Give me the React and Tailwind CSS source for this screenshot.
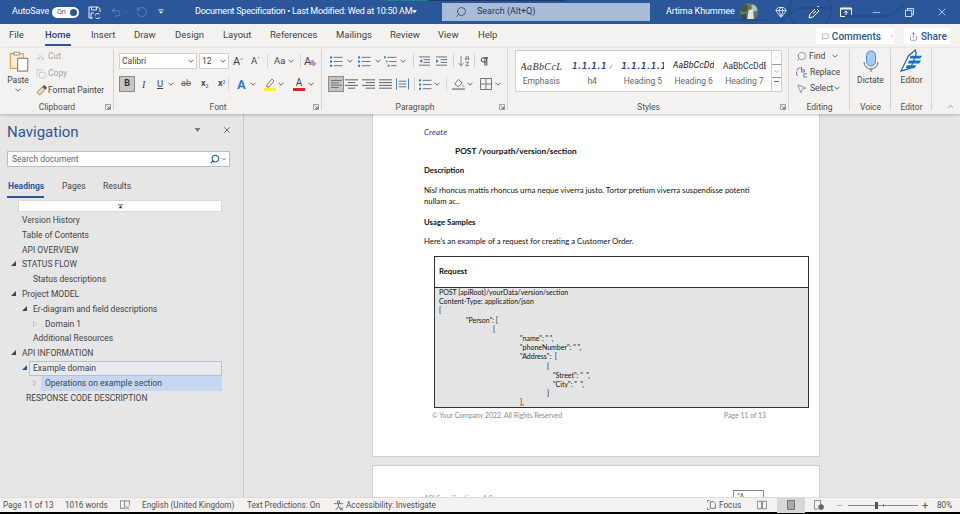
import React from "react";
import { Undo2, RotateCw, Search, Gem, Minus, X, Scissors, Copy, ChevronDown, ChevronUp, MessageSquare, Share, ArrowDownAZ, Pilcrow, MousePointer2 } from "lucide-react";

const Chev = ({ className = "" }) => (
  <svg viewBox="0 0 6 4" className={"w-[6px] h-[4px] shrink-0 " + className}><path d="M.5.7 3 3.2 5.5.7" fill="none" stroke="#555" strokeWidth=".9" /></svg>
);

const Lines = ({ kind = "left", className = "" }) => {
  const rows = {
    left: [[0, 14], [0, 10], [0, 14], [0, 10]],
    center: [[0, 14], [3, 11], [0, 14], [3, 11]],
    right: [[0, 14], [4, 14], [0, 14], [4, 14]],
    justify: [[0, 14], [0, 14], [0, 14], [0, 14]],
  }[kind];
  return (
    <svg viewBox="0 0 14 12" className={"w-[13px] h-[12px] shrink-0 " + className}>
      {rows.map((r, i) => <path key={i} d={`M${r[0]} ${1.5 + i * 3}H${r[1]}`} stroke="#666" strokeWidth="1.1" />)}
    </svg>
  );
};

const ListIcon = ({ kind }) => (
  <svg viewBox="0 0 14 13" className="w-[13px] h-[13px] shrink-0">
    {[2, 6.5, 11].map((y, i) => (
      <g key={i}>
        {kind === "multi"
          ? <rect x={i * 2} y={y - 1} width="2" height="2" fill={i === 1 ? "#888" : "#2b7cd3"} />
          : <rect x="0" y={y - 1} width="2.2" height="2.2" fill="#2b7cd3" />}
        <path d={`M${kind === "multi" ? 3.5 + i * 2 : 4} ${y}H13.5`} stroke="#777" strokeWidth="1.1" />
      </g>
    ))}
  </svg>
);

const Indent = ({ inc }) => (
  <svg viewBox="0 0 12 12" className="w-[11px] h-[11px] shrink-0">
    {[1, 4, 7, 10].map((y, i) => <path key={i} d={`M${i === 1 || i === 2 ? 5 : 0} ${y}H12`} stroke="#666" strokeWidth="1" />)}
    <path d={inc ? "M0 3.5V7.5L3 5.5Z" : "M3.5 3.5V7.5L.5 5.5Z"} fill="#2b7cd3" />
  </svg>
);

const Launcher = ({ className = "" }) => (
  <svg viewBox="0 0 7 7" className={"w-[6px] h-[6px] shrink-0 " + className}>
    <path d="M.5 6.5V.5H6.5V6.5Z" fill="none" stroke="#777" strokeWidth=".8" />
    <path d="M2 2 5.5 5.5M3 5.5H5.5V3" fill="none" stroke="#555" strokeWidth=".8" />
  </svg>
);

const Group = ({ w, label, launcher, divider = true, children }) => (
  <div className={"relative h-full shrink-0 flex flex-col " + w}>
    {divider && <div className="absolute right-0 top-[1px] bottom-[4px] w-px bg-[#d4d3d2]" />}
    <div className="flex-1 min-h-0">{children}</div>
    <div className="h-[14px] shrink-0 flex items-center justify-center text-[8.5px] text-[#505050] leading-none">{label}</div>
    {launcher && <Launcher className="absolute right-[3px] bottom-[4px]" />}
  </div>
);

function TitleBar() {
  return (
    <div className="relative h-[24px] shrink-0 bg-[#2b579a] flex items-center text-white text-[9.5px] overflow-hidden">
      <svg viewBox="0 0 300 24" className="absolute right-0 top-0 w-[300px] h-[24px]" fill="none" stroke="#254e8d" strokeWidth="2">
        <circle cx="150" cy="10" r="21" />
        <path d="M120 22 138 8H170M185 16H230L245 4M60 20H110" />
      </svg>
      <div className="absolute left-[385px] top-0 w-[43px] h-px bg-[#1d7f8c]" />
      <div className="absolute left-[428px] top-0 w-[137px] h-px bg-[#1b3a6c]" />
      <span className="ml-[12px] w-[40px] text-[9px] tracking-[-.1px]">AutoSave</span>
      <div className="w-[27px] h-[11px] rounded-full bg-white flex items-center justify-between pl-[5px] pr-[2px] text-[#2b579a] text-[7px]">
        <span>On</span><span className="w-[7px] h-[7px] rounded-full bg-[#2b579a]" />
      </div>
      <svg viewBox="0 0 13 13" className="ml-[9px] w-[13px] h-[13px]" fill="none" stroke="#fff" strokeWidth=".9">
        <path d="M5 12H1V1H10L12 3V6" /><path d="M3.5 1V4H8.5V1M3 12V7H6" /><path d="M7 9.5A2.5 2.5 0 0 1 11.5 8.5M12 11A2.5 2.5 0 0 1 7.5 11.5" />
      </svg>
      <Undo2 className="ml-[9px] w-[12px] h-[12px] opacity-30" strokeWidth={1.5} />
      <Chev className="ml-[1px] opacity-30 invert" />
      <RotateCw className="ml-[7px] w-[12px] h-[12px] opacity-30 -scale-x-100" strokeWidth={1.5} />
      <svg viewBox="0 0 7 6" className="ml-[10px] w-[6px] h-[6px]"><path d="M.5.5H6.500" stroke="#fff" /><path d="M1 2.500H6L3.500 5Z" fill="#fff" /></svg>
      <span className="ml-[31px] w-[214px] whitespace-nowrap text-[9px] tracking-[-.25px]">Document Specification • Last Modified: Wed at 10:50 AM</span>
      <svg viewBox="0 0 6 4" className="ml-[3px] w-[5px] h-[4px]"><path d="M0 0H6L3 3.500Z" fill="#fff" /></svg>
      <div className="ml-[25px] w-[208px] h-[18px] bg-[#a8bbd7] flex items-center text-[#24385a] text-[9px]">
        <Search className="ml-[13px] w-[12px] h-[12px] -scale-x-100" strokeWidth={1.4} />
        <span className="ml-[10px]">Search (Alt+Q)</span>
      </div>
      <span className="ml-[16px] w-[72px] whitespace-nowrap text-[9px] tracking-[-.1px]">Artima Khummee</span>
      <svg viewBox="0 0 18 18" className="ml-[2px] w-[18px] h-[18px]">
        <clipPath id="av"><circle cx="9" cy="9" r="9" /></clipPath>
        <g clipPath="url(#av)">
          <rect width="18" height="18" fill="#5d7c62" />
          <circle cx="4" cy="5" r="4" fill="#3f5a48" />
          <circle cx="14" cy="5" r="3.500" fill="#a9c4b8" />
          <path d="M7 18 9 5 13 7 14 18Z" fill="#e4e4dc" />
          <path d="M0 18V12L6 11 7 18Z" fill="#384b3e" />
          <circle cx="10" cy="5" r="2" fill="#8a6a52" />
        </g>
      </svg>
      <Gem className="ml-[17px] w-[12px] h-[12px]" strokeWidth={1.5} />
      <svg viewBox="0 0 12 13" className="ml-[21px] w-[12px] h-[13px]" fill="none" stroke="#fff" strokeWidth="1"><path d="M1 12 2 8 8 2 11 5 5 11Z" /><path d="M8 5 5 8" /><path d="M10 0V2M11 1H9" /></svg>
      <svg viewBox="0 0 12 10" className="ml-[20px] w-[12px] h-[10px]" fill="none" stroke="#fff"><path d="M.5 1.500H11.500V9.500H.5Z" /><path d="M.5 1.500H11.500" strokeWidth="2" /><path d="M6 8V4M4.300 5.600 6 4 7.700 5.600" /></svg>
      <Minus className="ml-[19px] w-[11px] h-[11px]" strokeWidth={1.3} />
      <svg viewBox="0 0 10 10" className="ml-[23px] w-[9px] h-[9px]" fill="none" stroke="#fff" strokeWidth=".9"><path d="M.5 2.500H7.500V9.500H.5Z" /><path d="M2.500 2.500V.5H9.500V7.500H7.500" /></svg>
      <X className="ml-[22px] w-[12px] h-[12px]" strokeWidth={1.3} />
    </div>
  );
}

function TabsRow() {
  const tabs = [["File", "w-[36px]"], ["Home", "w-[46px]"], ["Insert", "w-[43px]"], ["Draw", "w-[41px]"], ["Design", "w-[48px]"], ["Layout", "w-[47px]"], ["References", "w-[66px]"], ["Mailings", "w-[54px]"], ["Review", "w-[48px]"], ["View", "w-[40px]"], ["Help", "w-[40px]"]];
  return (
    <div className="h-[24px] shrink-0 flex items-center text-[9.5px] text-[#444] pl-[9px]">
      {tabs.map(([t, w]) => (
        <div key={t} className={w + " shrink-0 -translate-y-[1px]"}>
          {t === "Home"
            ? <span className="inline-block text-[#1f3f73] font-medium border-b-2 border-[#2b579a] pb-[1px] translate-y-[2px]">{t}</span>
            : <span>{t}</span>}
        </div>
      ))}
      <div className="ml-auto flex items-center gap-[9px] pr-[9px]">
        <div className="w-[79px] h-[16px] bg-white flex items-center pl-[6px] text-[#2b579a] font-medium text-[10px]">
          <MessageSquare className="w-[9px] h-[9px] mr-[3px]" strokeWidth={1.4} />
          <span>Comments</span>
          <ChevronDown className="ml-[8px] w-[8px] h-[8px] text-[#666]" strokeWidth={1.5} />
        </div>
        <div className="w-[47px] h-[16px] bg-white flex items-center pl-[5px] text-[#2b579a] font-medium text-[10px]">
          <Share className="w-[9px] h-[9px] mr-[3px]" strokeWidth={1.4} />
          <span>Share</span>
        </div>
      </div>
    </div>
  );
}

function Clipboard() {
  return (
    <Group w="w-[114px]" label="Clipboard" launcher>
      <div className="flex h-full">
        <div className="w-[36px] flex flex-col items-center pt-[2px] text-[8.5px] text-[#444]">
          <svg viewBox="0 0 22 24" className="w-[21px] h-[22px] ml-[2px]">
            <path d="M1 4H15V20H1Z" fill="#f8ecd8" stroke="#d79f4d" strokeWidth="1.2" />
            <path d="M5 2.500H11V5.500H5Z" fill="#fff" stroke="#888" />
            <path d="M9 9H20V23H9Z" fill="#fff" stroke="#666" />
          </svg>
          <span className="mt-[3px] leading-[11px]">Paste</span>
          <Chev className="mt-[2px]" />
        </div>
        <div className="flex flex-col text-[8.5px] text-[#a5a5a5]">
          <div className="h-[17px] flex items-center"><Scissors className="w-[9px] h-[9px] text-[#aaa] mr-[3px] -rotate-90" strokeWidth={1.2} /><span>Cut</span></div>
          <div className="h-[17px] flex items-center"><Copy className="w-[10px] h-[10px] text-[#aaa] mr-[2px]" strokeWidth={1.2} /><span>Copy</span></div>
          <div className="h-[17px] flex items-center text-[#444] whitespace-nowrap">
            <svg viewBox="0 0 12 12" className="w-[11px] h-[11px] mr-[1px]"><path d="M1 8 7 2 10 5 4 11Z" fill="#f3d9a4" stroke="#666" strokeWidth=".8" /><path d="M7 2 9 0 12 3 10 5Z" fill="#555" /></svg>
            <span>Format Painter</span>
          </div>
        </div>
      </div>
    </Group>
  );
}

function FontGroup() {
  return (
    <Group w="w-[208px]" label="Font" launcher>
      <div className="pl-[5px] pt-[5px] flex flex-col gap-[7px]">
        <div className="flex items-center h-[16px] text-[#444]">
          <div className="w-[78px] h-[16px] bg-white border border-[#d0d0d0] flex items-center justify-between px-[2px] text-[8.5px]"><span>Calibri</span><Chev /></div>
          <div className="ml-[2px] w-[30px] h-[16px] bg-white border border-[#d0d0d0] flex items-center justify-between px-[2px] text-[8.5px]"><span>12</span><Chev /></div>
          <span className="ml-[4px] w-[12px] text-[11px] leading-none">A<sup className="text-[6px] text-[#2b7cd3]">^</sup></span>
          <span className="ml-[6px] w-[12px] text-[9.5px] leading-none">A<sup className="text-[6px] text-[#2b7cd3]">ˇ</sup></span>
          <div className="ml-[4px] w-px h-[14px] bg-[#d4d3d2]" />
          <span className="ml-[6px] text-[9.5px] w-[13px]">Aa</span><Chev className="ml-[1px]" />
          <div className="ml-[6px] w-px h-[14px] bg-[#d4d3d2]" />
          <span className="ml-[3px] text-[11px] leading-none relative">A<span className="absolute left-[6px] top-[5px] w-[6px] h-[4px] bg-[#c88bd6] rotate-45" /></span>
        </div>
        <div className="flex items-center h-[16px] text-[#444] text-[10px]">
          <div className="w-[16px] h-[16px] bg-[#c6c6c6] border border-[#8a8a8a] flex items-center justify-center font-bold text-[9px] text-[#333]">B</div>
          <span className="ml-[7px] w-[8px] italic font-['Liberation_Serif']">I</span>
          <span className="ml-[7px] underline w-[8px] text-[9.5px]">U</span>
          <Chev className="ml-[3px]" />
          <span className="ml-[7px] w-[12px] line-through text-[#666] text-[9px]">ab</span>
          <span className="ml-[8px] w-[11px] font-semibold text-[9px]">x<sub className="text-[5px] text-[#2b7cd3]">2</sub></span>
          <span className="ml-[6px] w-[11px] font-semibold text-[9px]">x<sup className="text-[5px] text-[#2b7cd3]">2</sup></span>
          <div className="ml-[-1px] w-px h-[14px] bg-[#d4d3d2]" />
          <span className="ml-[8px] w-[12px] text-[13px] font-bold text-[#2b7cd3] leading-none">A</span>
          <Chev className="ml-[1px]" />
          <svg viewBox="0 0 12 14" className="ml-[8px] w-[12px] h-[14px] shrink-0"><path d="M3 8 8 2 10 4 5 10H3Z" fill="#fff" stroke="#666" strokeWidth=".9" /><rect y="11" width="12" height="3" fill="#ffef33" /></svg>
          <Chev className="ml-[2px]" />
          <div className="ml-[9px] w-[12px] flex flex-col items-center leading-none"><span className="text-[10px] leading-[11px]">A</span><span className="w-[12px] h-[3px] bg-[#e01f26]" /></div>
          <Chev className="ml-[3px]" />
        </div>
      </div>
    </Group>
  );
}

function ParagraphGroup() {
  const Sep = ({ c = "" }) => <div className={"w-px h-[14px] bg-[#d4d3d2] shrink-0 " + c} />;
  return (
    <Group w="w-[186px]" label="Paragraph" launcher>
      <div className="pl-[6px] pt-[5px] flex flex-col gap-[7px]">
        <div className="flex items-center h-[16px] pl-[2px]">
          <ListIcon /><Chev className="ml-[4px]" />
          <div className="ml-[5px]"><ListIcon /></div><Chev className="ml-[4px]" />
          <div className="ml-[3px]"><ListIcon kind="multi" /></div><Chev className="ml-[3px]" />
          <Sep c="ml-[7px]" />
          <div className="ml-[5px]"><Indent /></div>
          <div className="ml-[6px]"><Indent inc /></div>
          <Sep c="ml-[6px]" />
          <ArrowDownAZ className="ml-[3px] w-[14px] h-[14px] text-[#555]" strokeWidth={1.2} />
          <Sep c="ml-[3px]" />
          <Pilcrow className="ml-[4px] w-[11px] h-[11px] text-[#333]" strokeWidth={2} />
        </div>
        <div className="flex items-center h-[16px]">
          <div className="w-[16px] h-[16px] bg-[#c6c6c6] border border-[#8a8a8a] flex items-center justify-center"><Lines kind="left" className="!w-[11px]" /></div>
          <Lines kind="center" className="ml-[1px]" />
          <Lines kind="right" className="ml-[4px]" />
          <Lines kind="justify" className="ml-[4px]" />
          <svg viewBox="0 0 14 12" className="ml-[4px] w-[13px] h-[12px] shrink-0" fill="none" stroke="#2b7cd3" strokeWidth="1"><path d="M.5 0V12M13.500 0V12" /><path d="M3 3H11M3 6H11M3 9H11" stroke="#666" /></svg>
          <Sep c="ml-[5px]" />
          <div className="ml-[4px]"><ListIcon /></div><Chev className="ml-[2px]" />
          <Sep c="ml-[6px]" />
          <svg viewBox="0 0 14 14" className="ml-[5px] w-[13px] h-[14px] shrink-0"><path d="M3 7 7 2 11 6 7 10Z" fill="#fff" stroke="#666" /><path d="M11 8 13 10" stroke="#2b7cd3" /><rect y="11.500" width="14" height="2" fill="#999" /></svg>
          <Chev className="ml-[2px]" />
          <svg viewBox="0 0 12 12" className="ml-[7px] w-[12px] h-[12px] shrink-0" fill="none" stroke="#777"><path d="M.5.5H11.500V11.500H.5ZM6 .5V11.500M.5 6H11.500" /></svg>
          <Chev className="ml-[3px]" />
        </div>
      </div>
    </Group>
  );
}

function StylesGroup() {
  const items = [
    ["Emphasis", "AaBbCcL", "italic font-['Liberation_Serif'] text-[#333] text-[10px] tracking-[.4px]"],
    ["h4", "1.1.1.1 ⁄", "font-bold italic text-[#2f3699] text-[8.5px] font-['DejaVu_Sans_Mono'] tracking-[-.3px]"],
    ["Heading 5", "1.1.1.1.1", "font-bold italic text-[#2f3699] text-[8.5px] font-['DejaVu_Sans_Mono'] tracking-[-.2px]"],
    ["Heading 6", "AaBbCcDd", "italic text-[#222] text-[9px]"],
    ["Heading 7", "AaBbCcDdE", "text-[#333] text-[8.5px]"],
  ];
  return (
    <Group w="w-[281px]" label="Styles" launcher>
      <div className="pl-[7px] pt-[2px]">
        <div className="w-[267px] h-[42px] bg-white border border-[#d0d0d0] flex">
          <div className="flex flex-1 min-w-0 overflow-hidden">
            {items.map(([l, s, c]) => (
              <div key={l} className="shrink-0 w-[50.75px] flex flex-col items-center text-center">
                <div className={"mt-[6px] h-[18px] max-w-[43px] flex items-center overflow-hidden whitespace-nowrap " + c}>{s}</div>
                <div className="text-[8.5px] text-[#666] leading-[11px] mt-[1px]">{l}</div>
              </div>
            ))}
          </div>
          <div className="w-[10px] shrink-0 flex flex-col border-l border-[#d0d0d0] text-[#777]">
            <div className="h-[13px] flex items-center justify-center"><ChevronUp className="w-[7px] h-[7px] text-[#bbb]" /></div>
            <div className="h-[14px] border-y border-[#999] flex items-center justify-center"><ChevronDown className="w-[7px] h-[7px]" /></div>
            <div className="h-[13px] flex flex-col items-center justify-center"><span className="w-[5px] h-px bg-[#666] mb-[1px]" /><ChevronDown className="w-[7px] h-[5px]" /></div>
          </div>
        </div>
      </div>
    </Group>
  );
}

function EditingGroup() {
  return (
    <Group w="w-[61px]" label="Editing">
      <div className="pl-[7px] text-[8.5px] text-[#444]">
        <div className="h-[16px] flex items-center"><Search className="w-[11px] h-[11px] text-[#555] -scale-x-100 mr-[2px]" strokeWidth={1.2} /><span>Find</span><Chev className="ml-[7px]" /></div>
        <div className="h-[16px] flex items-center">
          <svg viewBox="0 0 13 13" className="w-[12px] h-[12px] mr-[2px]" fill="none" strokeWidth="1"><path d="M1 5A3.500 3.500 0 0 1 5 2" stroke="#2b7cd3" /><path d="M2 11A3.500 3.500 0 0 1 1 6" stroke="#7b5bc4" /><path d="M6 1V6.500H9V4H6" stroke="#7b5bc4" /><path d="M12 8.500H8.500V12H12" stroke="#2b7cd3" /></svg>
          <span>Replace</span>
        </div>
        <div className="h-[16px] flex items-center"><MousePointer2 className="w-[11px] h-[11px] text-[#444] mr-[3px]" strokeWidth={1.1} /><span>Select</span><Chev className="ml-[1px]" /></div>
      </div>
    </Group>
  );
}

function VoiceGroup() {
  return (
    <Group w="w-[41px]" label="Voice">
      <div className="flex flex-col items-center pt-[2px] text-[8.5px] text-[#444]">
        <svg viewBox="0 0 16 22" className="w-[16px] h-[22px]">
          <rect x="3.500" y="1" width="9" height="15" rx="4.500" fill="#a5cdef" stroke="#3e8ddd" />
          <path d="M1 12A7 7 0 0 0 15 12M8 19V22" fill="none" stroke="#666" strokeWidth="1" />
        </svg>
        <span className="mt-[3px] leading-[11px]">Dictate</span>
      </div>
    </Group>
  );
}

function EditorGroup() {
  return (
    <Group w="w-[41px]" label="Editor">
      <div className="flex flex-col items-center pt-[1px] text-[8.5px] text-[#444]">
        <svg viewBox="0 0 24 24" className="w-[23px] h-[23px]">
          <path d="M1 23 9 7 16 1 17 5 11 20Z" fill="#fff" stroke="#1b5fb0" strokeWidth="1.2" />
          <path d="M11 7H23L21 10H10ZM9.500 12H22L20 15H8ZM7 17H17L15 20H6Z" fill="#1b6dc9" />
        </svg>
        <span className="mt-[3px] leading-[11px]">Editor</span>
      </div>
    </Group>
  );
}

function RibbonBody() {
  return (
    <div className="relative h-[66px] shrink-0 flex shadow-[0_1px_3px_rgba(0,0,0,0.25)] z-10 bg-[#f3f2f1]">
      <Clipboard />
      <FontGroup />
      <ParagraphGroup />
      <StylesGroup />
      <EditingGroup />
      <VoiceGroup />
      <EditorGroup />
      <div className="flex-1 flex items-end justify-end pr-[5px] pb-[3px]"><ChevronUp className="w-[9px] h-[9px] text-[#444]" strokeWidth={1.4} /></div>
    </div>
  );
}

const tree = [
  ["Version History", "pl-[22px]"],
  ["Table of Contents", "pl-[22px]"],
  ["API OVERVIEW", "pl-[22px]"],
  ["STATUS FLOW", "pl-[22px]", "open", "left-[11px]"],
  ["Status descriptions", "pl-[33px]"],
  ["Project MODEL", "pl-[22px]", "open", "left-[11px]"],
  ["Er-diagram and field descriptions", "pl-[33px]", "open", "left-[22px]"],
  ["Domain 1", "pl-[45px]", "closed", "left-[33px]"],
  ["Additional Resources", "pl-[33px]"],
  ["API INFORMATION", "pl-[22px]", "open", "left-[11px]"],
  ["Example domain", "pl-[33px]", "openblue", "left-[22px]", "hover"],
  ["Operations on example section", "pl-[45px]", "closed", "left-[33px]", "selected"],
  ["RESPONSE CODE DESCRIPTION", "pl-[26px]"],
];

const Caret = ({ kind, pos }) => {
  if (kind === "closed") return <svg viewBox="0 0 5 7" className={"absolute top-[4px] w-[4px] h-[6px] " + pos}><path d="M.5.5 4 3.500.5 6.500Z" fill="#f5f5f5" stroke="#999" strokeWidth=".7" /></svg>;
  return <svg viewBox="0 0 6 6" className={"absolute top-[4px] w-[5px] h-[5px] " + pos}><path d="M6 0V6H0Z" fill={kind === "openblue" ? "#2b579a" : "#444"} /></svg>;
};

function Nav() {
  return (
    <div className="w-[244px] shrink-0 border-r border-[#c8c8c8] bg-[#e6e6e6] flex flex-col">
      <div className="h-[37px] shrink-0 flex items-center pl-[7px]">
        <span className="w-[187px] text-[15px] text-[#2b579a] leading-none -mt-[1px]">Navigation</span>
        <svg viewBox="0 0 6 4" className="-mt-[6px] w-[7px] h-[4px]"><path d="M0 0H6L3 4Z" fill="#777" /></svg>
        <X className="ml-[21px] -mt-[6px] w-[10px] h-[10px] text-[#555]" strokeWidth={2} />
      </div>
      <div className="ml-[7px] w-[223px] h-[16px] shrink-0 bg-white border border-[#bdbdbd] flex items-center pl-[4px] pr-[2px] text-[8.5px] text-[#666]">
        <span className="flex-1">Search document</span>
        <Search className="w-[10px] h-[10px] text-[#2b579a] -scale-x-100" strokeWidth={2.6} />
        <Chev className="ml-[1px] scale-75" />
      </div>
      <div className="h-[30px] shrink-0 flex items-start pl-[8px] pt-[14px] text-[8.5px] text-[#444] relative leading-[11px]">
        <span className="font-bold text-[#2b579a] w-[54px]">Headings</span>
        <span className="w-[41px]">Pages</span>
        <span>Results</span>
        <span className="absolute left-[7px] bottom-[-1px] w-[37px] h-[2px] bg-[#2b579a]" />
      </div>
      <div className="ml-[18px] mt-[3px] w-[204px] h-[12px] shrink-0 bg-white border border-[#d8d8d8] flex items-center justify-center">
        <svg viewBox="0 0 6 5" className="w-[5px] h-[5px]"><path d="M0 .5H6" stroke="#444" /><path d="M3 1.200.5 4.500H5.500Z" fill="#444" /></svg>
      </div>
      <div className="mt-[1px] text-[8.5px] text-[#444]">
        {tree.map(([t, pl, car, pos, st]) => (
          <div key={t} className={"relative h-[14.8px] flex items-center " + pl}>
            {st === "hover" && <div className="absolute left-[29px] w-[193px] top-0 bottom-0 border border-[#b4c1d3] bg-[#e8eaee]" />}
            {st === "selected" && <div className="absolute left-[41px] w-[181px] top-0 bottom-0 bg-[#c5d8f1]" />}
            {car && <Caret kind={car} pos={pos} />}
            <span className="relative whitespace-nowrap">{t}</span>
          </div>
        ))}
      </div>
    </div>
  );
}

const Code = ({ pl = "", children }) => <div className={"h-[9.2px] leading-[9.2px] whitespace-pre " + pl}>{children}</div>;

function Doc() {
  return (
    <div className="flex-1 min-w-0 bg-[#e6e6e6] overflow-hidden pl-[128px] font-['Lato'] text-[#111] text-[7.75px]">
      <div className="w-[448px] h-[343px] bg-white border-x border-b border-[#cfcfcf] flex flex-col pl-[51px]">
        <div className="mt-[13px] h-[10px] leading-[10px] italic text-[#1f1f80] tracking-[.3px]">Create</div>
        <div className="mt-[9px] ml-[31px] h-[10px] leading-[10px] font-bold text-[8.3px]">POST /yourpath/version/section</div>
        <div className="mt-[9px] h-[10px] leading-[10px] font-bold">Description</div>
        <div className="mt-[10px] w-[340px] leading-[11px]">Nisl rhoncus mattis rhoncus urna neque viverra justo. Tortor pretium viverra suspendisse potenti nullam ac..</div>
        <div className="mt-[10px] h-[10px] leading-[10px] font-bold">Usage Samples</div>
        <div className="mt-[9px] h-[10px] leading-[10px]">Here's an example of a request for creating a Customer Order.</div>
        <div className="mt-[10px] ml-[10px] w-[375px] h-[152px] shrink-0 border border-[#333] flex flex-col">
          <div className="h-[31px] shrink-0 border-b border-[#333] flex items-center pl-[4px] font-bold">Request</div>
          <div className="flex-1 min-h-0 overflow-hidden bg-[#e4e4e4] pl-[4px] text-[7px]">
            <Code>POST {"{apiRoot}"}/yourData/version/section</Code>
            <Code>Content-Type: application/json</Code>
            <Code>{"{"}</Code>
            <Code pl="pl-[27px]">"Person": [</Code>
            <Code pl="pl-[54px]">{"{"}</Code>
            <Code pl="pl-[81px]">"name": " ",</Code>
            <Code pl="pl-[81px]">"phoneNumber": " ",</Code>
            <Code pl="pl-[81px]">"Address":  [</Code>
            <Code pl="pl-[108px]">{"{"}</Code>
            <Code pl="pl-[114px]">"Street": "  ",</Code>
            <Code pl="pl-[114px]">"City": "  ",</Code>
            <Code pl="pl-[108px]">{"}"}</Code>
            <Code pl="pl-[81px]">],</Code>
          </div>
        </div>
        <div className="mt-[2px] ml-[8px] flex text-[6.9px] text-[#8a8a8a] leading-[10px]">
          <span className="w-[292px]">© Your Company 2022. All Rights Reserved</span>
          <span>Page 11 of 13</span>
        </div>
      </div>
      <div className="mt-[8px] w-[448px] h-[60px] bg-white border-x border-t border-[#cfcfcf] relative pl-[51px] pt-[27px] text-[7px] text-[#999] leading-[10px]">
        API Specification  v 1.0
        <div className="absolute left-[360px] top-[24px] w-[31px] h-[20px] border border-[#888] pl-[3px] text-[#666] leading-[10px]">*A</div>
      </div>
    </div>
  );
}

function StatusBar() {
  return (
    <div className="relative z-10 h-[15px] shrink-0 bg-[#f3f2f1] border-t border-[#dcdcdc] flex items-center text-[8.2px] text-[#505050] whitespace-nowrap">
      <span className="ml-[3px] w-[62px]">Page 11 of 13</span>
      <span className="w-[55px]">1016 words</span>
      <svg viewBox="0 0 12 11" className="w-[10px] h-[10px]" fill="none" stroke="#666" strokeWidth=".9"><path d="M.5.5H5.500V9.500H.5ZM5.500.5H11.500V6" /><path d="M7 7 11 11M11 7 7 11" /></svg>
      <span className="ml-[12px] w-[105px]">English (United Kingdom)</span>
      <span className="w-[86px]">Text Predictions: On</span>
      <svg viewBox="0 0 12 12" className="w-[11px] h-[11px] mr-[2px]" fill="none" stroke="#555" strokeWidth=".9"><circle cx="6" cy="2" r="1.300" /><path d="M1 4H11M6 4V7L3 11M6 7 9 11" /><path d="M7 8 11 11M11 8 8 11" /></svg>
      <span className="w-[361px]">Accessibility: Investigate</span>
      <svg viewBox="0 0 12 12" className="w-[10px] h-[10px] mr-[2px]" fill="none" stroke="#555" strokeWidth=".9"><path d="M4 2H8L10 4V10H4Z" /><path d="M.5 3V.5H3M.5 9V11.500H3" /></svg>
      <span className="w-[38px]">Focus</span>
      <svg viewBox="0 0 12 11" className="w-[10px] h-[10px]" fill="none" stroke="#666" strokeWidth=".9"><path d="M.5 1H5.500V10H.5ZM6.500 1H11.500V10H6.500Z" /></svg>
      <div className="ml-[10px] w-[28px] h-[15px] bg-[#d8d7d6] flex items-center justify-center"><svg viewBox="0 0 9 11" className="w-[8px] h-[10px]"><path d="M.5.5H8.500V10.500H.5Z" fill="#aaa" stroke="#666" /></svg></div>
      <svg viewBox="0 0 12 12" className="ml-[9px] w-[10px] h-[10px]" fill="none" stroke="#666" strokeWidth=".9"><path d="M.5.5H8V5M.5.5V11H5" /><circle cx="8.500" cy="8.500" r="3" fill="#666" /></svg>
      <Minus className="ml-[12px] w-[7px] h-[7px]" strokeWidth={1.5} />
      <div className="relative ml-[5px] w-[70px] h-px bg-[#888]">
        <span className="absolute left-[27px] -top-[3px] w-[3px] h-[7px] bg-[#555]" />
        <span className="absolute left-[35px] -top-[1px] w-px h-[3px] bg-[#777]" />
      </div>
      <span className="ml-[4px] w-[10px] text-[11px] leading-none">+</span>
      <span className="ml-[5px]">80%</span>
    </div>
  );
}

export default function App() {
  return (
    <div className="w-[960px] h-[514px] overflow-hidden flex flex-col bg-[#f3f2f1] font-['Roboto','Noto_Sans',sans-serif]">
      <TitleBar />
      <TabsRow />
      <RibbonBody />
      <div className="flex flex-1 min-h-0">
        <Nav />
        <Doc />
      </div>
      <StatusBar />
      <div className="h-[2px] shrink-0 bg-black" />
    </div>
  );
}
